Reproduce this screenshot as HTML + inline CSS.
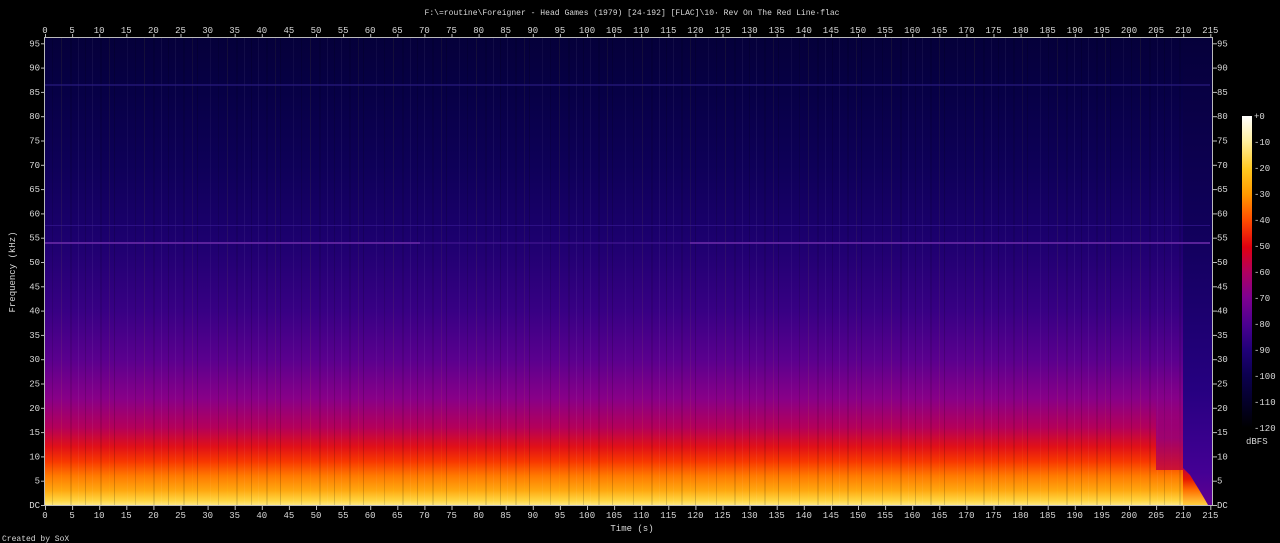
<!DOCTYPE html>
<html><head><meta charset="utf-8"><style>
html,body{margin:0;padding:0;background:#000;width:1280px;height:543px;overflow:hidden}
svg{display:block}
text{font-family:"Liberation Mono","DejaVu Sans Mono",monospace;font-size:9px;fill:#d8d8d8}
</style></head><body>
<svg width="1280" height="543" viewBox="0 0 1280 543" xmlns="http://www.w3.org/2000/svg">
<defs>
<linearGradient id="sp" x1="0" y1="0" x2="0" y2="1">
<stop offset="0" stop-color="#05003a"/>
<stop offset="0.117" stop-color="#070046"/>
<stop offset="0.273" stop-color="#0e0058"/>
<stop offset="0.429" stop-color="#1c006e"/>
<stop offset="0.585" stop-color="#380084"/>
<stop offset="0.688" stop-color="#5a008e"/>
<stop offset="0.772" stop-color="#880088"/>
<stop offset="0.834" stop-color="#b4005a"/>
<stop offset="0.875" stop-color="#e01018"/>
<stop offset="0.907" stop-color="#f83800"/>
<stop offset="0.938" stop-color="#ff7a00"/>
<stop offset="0.969" stop-color="#ffa810"/>
<stop offset="0.99" stop-color="#ffd440"/>
<stop offset="1" stop-color="#ffe880"/>
</linearGradient>
<linearGradient id="end" x1="0" y1="0" x2="0" y2="1">
<stop offset="0" stop-color="#05003a"/>
<stop offset="0.4" stop-color="#10005a"/>
<stop offset="0.75" stop-color="#260080"/>
<stop offset="0.93" stop-color="#440094"/>
<stop offset="1" stop-color="#600090"/>
</linearGradient>
<linearGradient id="end2" x1="0" y1="0" x2="0" y2="1">
<stop offset="0" stop-color="#c00040"/>
<stop offset="0.3" stop-color="#e81800"/>
<stop offset="0.6" stop-color="#ff7000"/>
<stop offset="1" stop-color="#ffd040"/>
</linearGradient>
<linearGradient id="mid" x1="0" y1="0" x2="0" y2="1">
<stop offset="0" stop-color="#7a0090" stop-opacity="0"/>
<stop offset="0.6" stop-color="#8a0088" stop-opacity="0.7"/>
<stop offset="1" stop-color="#c00040" stop-opacity="0.8"/>
</linearGradient>
<linearGradient id="cb" x1="0" y1="0" x2="0" y2="1">
<stop offset="0" stop-color="#ffffff"/>
<stop offset="0.08" stop-color="#fff0a0"/>
<stop offset="0.17" stop-color="#ffc820"/>
<stop offset="0.25" stop-color="#ff9a00"/>
<stop offset="0.33" stop-color="#ff5000"/>
<stop offset="0.42" stop-color="#e00010"/>
<stop offset="0.5" stop-color="#b00060"/>
<stop offset="0.58" stop-color="#800090"/>
<stop offset="0.67" stop-color="#4a0090"/>
<stop offset="0.75" stop-color="#200078"/>
<stop offset="0.83" stop-color="#0c0050"/>
<stop offset="0.92" stop-color="#040028"/>
<stop offset="1" stop-color="#000000"/>
</linearGradient>
<pattern id="str" patternUnits="userSpaceOnUse" width="83" height="10">
<rect x="2" y="0" width="1" height="10" fill="#000" opacity="0.15"/>
<rect x="9" y="0" width="1" height="10" fill="#fff" opacity="0.05"/>
<rect x="17" y="0" width="2" height="10" fill="#000" opacity="0.1"/>
<rect x="26" y="0" width="1" height="10" fill="#ff0" opacity="0.05"/>
<rect x="31" y="0" width="1" height="10" fill="#000" opacity="0.16"/>
<rect x="44" y="0" width="1" height="10" fill="#fff" opacity="0.04"/>
<rect x="52" y="0" width="1" height="10" fill="#000" opacity="0.12"/>
<rect x="61" y="0" width="1" height="10" fill="#ff0" opacity="0.06"/>
<rect x="70" y="0" width="2" height="10" fill="#000" opacity="0.1"/>
<rect x="78" y="0" width="1" height="10" fill="#fff" opacity="0.05"/>
</pattern>
<pattern id="xt" patternUnits="userSpaceOnUse" x="45" width="27.1" height="4">
<rect x="0" y="0" width="1" height="4" fill="#bbb"/>
</pattern>
<pattern id="yt" patternUnits="userSpaceOnUse" y="505" width="4" height="24.3">
<rect x="0" y="0" width="4" height="1" fill="#bbb"/>
</pattern>
</defs>

<text x="632" y="15" text-anchor="middle" style="font-size:8px" textLength="415" lengthAdjust="spacingAndGlyphs">F:\=routine\Foreigner - Head Games (1979) [24·192] [FLAC]\10· Rev On The Red Line·flac</text>

<rect x="45" y="38" width="1167" height="467" fill="url(#sp)"/>
<rect x="45" y="38" width="1167" height="467" fill="url(#str)"/>
<rect x="1156" y="390" width="27" height="80" fill="url(#mid)"/>
<rect x="1183" y="38" width="29" height="467" fill="url(#end)"/>
<polygon points="1183,468 1190,475 1198,488 1204,498 1208,505 1183,505" fill="url(#end2)"/>
<rect x="45" y="242" width="375" height="2" fill="#6a2aa8" opacity="0.8"/>
<rect x="420" y="242" width="270" height="2" fill="#4a1a98" opacity="0.5"/>
<rect x="690" y="242" width="520" height="2" fill="#6a2aa8" opacity="0.8"/>
<rect x="45" y="225" width="1165" height="1" fill="#3a1a98" opacity="0.6"/>
<rect x="45" y="84" width="1165" height="2" fill="#2a1a80" opacity="0.6"/>
<rect x="44.5" y="37.5" width="1168" height="468" fill="none" stroke="#bbb" stroke-width="1"/>
<rect x="45" y="34" width="1167" height="4" fill="url(#xt)"/>
<rect x="45" y="506" width="1167" height="4" fill="url(#xt)"/>
<rect x="41" y="38" width="4" height="468" fill="url(#yt)"/>
<rect x="1213" y="38" width="4" height="468" fill="url(#yt)"/>

<g text-anchor="middle">
<g transform="translate(0,33)">
<text x="45">0</text><text x="72.1">5</text><text x="99.2">10</text><text x="126.3">15</text><text x="153.4">20</text><text x="180.5">25</text><text x="207.6">30</text><text x="234.7">35</text><text x="261.8">40</text><text x="288.9">45</text><text x="316">50</text><text x="343.1">55</text><text x="370.2">60</text><text x="397.3">65</text><text x="424.4">70</text><text x="451.5">75</text><text x="478.6">80</text><text x="505.7">85</text><text x="532.8">90</text><text x="559.9">95</text><text x="587">100</text><text x="614.1">105</text><text x="641.2">110</text><text x="668.3">115</text><text x="695.4">120</text><text x="722.5">125</text><text x="749.6">130</text><text x="776.7">135</text><text x="803.8">140</text><text x="830.9">145</text><text x="858">150</text><text x="885.1">155</text><text x="912.2">160</text><text x="939.3">165</text><text x="966.4">170</text><text x="993.5">175</text><text x="1020.6">180</text><text x="1047.7">185</text><text x="1074.8">190</text><text x="1101.9">195</text><text x="1129">200</text><text x="1156.1">205</text><text x="1183.2">210</text><text x="1210.3">215</text>
</g>
<g transform="translate(0,518)">
<text x="45">0</text><text x="72.1">5</text><text x="99.2">10</text><text x="126.3">15</text><text x="153.4">20</text><text x="180.5">25</text><text x="207.6">30</text><text x="234.7">35</text><text x="261.8">40</text><text x="288.9">45</text><text x="316">50</text><text x="343.1">55</text><text x="370.2">60</text><text x="397.3">65</text><text x="424.4">70</text><text x="451.5">75</text><text x="478.6">80</text><text x="505.7">85</text><text x="532.8">90</text><text x="559.9">95</text><text x="587">100</text><text x="614.1">105</text><text x="641.2">110</text><text x="668.3">115</text><text x="695.4">120</text><text x="722.5">125</text><text x="749.6">130</text><text x="776.7">135</text><text x="803.8">140</text><text x="830.9">145</text><text x="858">150</text><text x="885.1">155</text><text x="912.2">160</text><text x="939.3">165</text><text x="966.4">170</text><text x="993.5">175</text><text x="1020.6">180</text><text x="1047.7">185</text><text x="1074.8">190</text><text x="1101.9">195</text><text x="1129">200</text><text x="1156.1">205</text><text x="1183.2">210</text><text x="1210.3">215</text>
</g>
</g>
<text x="632" y="531" text-anchor="middle">Time (s)</text>
<text x="2" y="541" style="font-size:8px">Created by SoX</text>
<text transform="translate(15,272) rotate(-90)" text-anchor="middle">Frequency (kHz)</text>

<g text-anchor="end" transform="translate(40,3)">
<text y="505">DC</text><text y="480.7">5</text><text y="456.4">10</text><text y="432.1">15</text><text y="407.8">20</text><text y="383.5">25</text><text y="359.2">30</text><text y="334.9">35</text><text y="310.6">40</text><text y="286.3">45</text><text y="262">50</text><text y="237.7">55</text><text y="213.4">60</text><text y="189.1">65</text><text y="164.8">70</text><text y="140.5">75</text><text y="116.2">80</text><text y="91.9">85</text><text y="67.6">90</text><text y="43.3">95</text>
</g>
<g transform="translate(1217,3)">
<text y="505">DC</text><text y="480.7">5</text><text y="456.4">10</text><text y="432.1">15</text><text y="407.8">20</text><text y="383.5">25</text><text y="359.2">30</text><text y="334.9">35</text><text y="310.6">40</text><text y="286.3">45</text><text y="262">50</text><text y="237.7">55</text><text y="213.4">60</text><text y="189.1">65</text><text y="164.8">70</text><text y="140.5">75</text><text y="116.2">80</text><text y="91.9">85</text><text y="67.6">90</text><text y="43.3">95</text>
</g>

<rect x="1242" y="116" width="10" height="312" fill="url(#cb)"/>
<g transform="translate(1254,3)">
<text y="116">+0</text><text y="142">-10</text><text y="168">-20</text><text y="194">-30</text><text y="220">-40</text><text y="246">-50</text><text y="272">-60</text><text y="298">-70</text><text y="324">-80</text><text y="350">-90</text><text y="376">-100</text><text y="402">-110</text><text y="428">-120</text>
</g>
<text x="1246" y="444">dBFS</text>
</svg>
</body></html>
